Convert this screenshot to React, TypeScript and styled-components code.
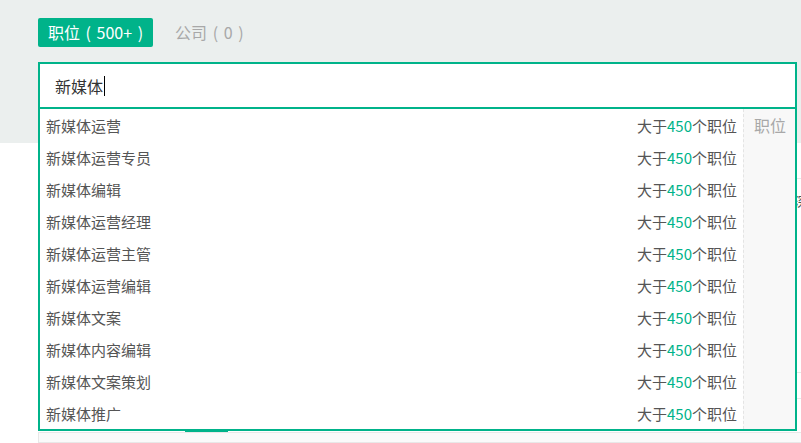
import React from 'react';
import styled, { createGlobalStyle } from 'styled-components';

const GREEN = '#00b38a';

const suggestions = [
  '新媒体运营',
  '新媒体运营专员',
  '新媒体编辑',
  '新媒体运营经理',
  '新媒体运营主管',
  '新媒体运营编辑',
  '新媒体文案',
  '新媒体内容编辑',
  '新媒体文案策划',
  '新媒体推广',
];

function App() {
  return (
    <Page>
      <GlobalStyle />
      <Header>
        <Tabs>
          <Tab active>职位 ( 500+ )</Tab>
          <Tab>公司 ( 0 )</Tab>
        </Tabs>
        <SearchWrap>
          <SearchBox>
            <Query>新媒体</Query>
            <Caret />
          </SearchBox>
          <Dropdown>
            <Items>
              {suggestions.map((s) => (
                <Item key={s}>
                  <Name>{s}</Name>
                  <Count>
                    大于<em>450</em>个职位
                  </Count>
                </Item>
              ))}
            </Items>
            <Side>职位</Side>
          </Dropdown>
        </SearchWrap>
      </Header>

      <Content>
        <Filters>
          <FilterRow tall>
            <FilterText>深</FilterText>
          </FilterRow>
          <FilterRow />
        </Filters>
        <TabBar>
          <BarTab />
        </TabBar>
        <ListBox />
      </Content>
    </Page>
  );
}

export default App;

const GlobalStyle = createGlobalStyle`
  html, body {
    margin: 0;
    padding: 0;
    background: #fff;
    overflow: hidden;
  }
  body {
    font-family: "Noto Sans CJK SC", "Noto Sans", sans-serif;
  }
`;

const Page = styled.div`
  width: 801px;
  height: 443px;
  overflow: hidden;
`;

const Header = styled.div`
  height: 143px;
  box-sizing: border-box;
  background: #ebefee;
  padding: 18px 4px 0 38px;
`;

const Tabs = styled.div`
  display: flex;
  align-items: center;
  gap: 12px;
  height: 29px;
`;

const Tab = styled.div<{ active?: boolean }>`
  height: 29px;
  line-height: 29px;
  padding: 0 10px;
  border-radius: 2px;
  font-size: 16px;
  word-spacing: 2px;
  color: ${(p) => (p.active ? '#fff' : '#a8a8a8')};
  background: ${(p) => (p.active ? GREEN : 'transparent')};
`;

const SearchWrap = styled.div`
  position: relative;
  margin-top: 15px;
`;

const SearchBox = styled.div`
  height: 47px;
  box-sizing: border-box;
  border: 2px solid ${GREEN};
  background: #fff;
  display: flex;
  align-items: center;
  padding-left: 15px;
`;

const Query = styled.span`
  font-size: 16px;
  color: #333;
`;

const Caret = styled.span`
  display: inline-block;
  width: 1px;
  height: 20px;
  background: #000;
  margin-left: 1px;
`;

const Dropdown = styled.div`
  position: absolute;
  top: 100%;
  left: 0;
  right: 0;
  z-index: 10;
  display: flex;
  background: #fff;
  border: 2px solid ${GREEN};
  border-top: none;
`;

const Items = styled.ul`
  flex: 1;
  list-style: none;
  margin: 0;
  padding: 0 6px 0 6px;
`;

const Item = styled.li`
  height: 32px;
  display: flex;
  align-items: center;
  justify-content: space-between;
  font-size: 15px;
  color: #555;
`;

const Name = styled.span``;

const Count = styled.span`
  em {
    font-style: normal;
    color: ${GREEN};
  }
`;

const Side = styled.div`
  width: 52px;
  box-sizing: border-box;
  background: #f8f8f8;
  border-left: 1px dashed #e4e4e4;
  padding-left: 10px;
  line-height: 32px;
  font-size: 16px;
  color: #a8a8a8;
`;

const Content = styled.div`
  margin-left: 38px;
  width: 820px;
  padding-top: 35px;
`;

const Filters = styled.div`
  border-top: 1px solid #e8e8e8;
`;

const FilterRow = styled.div<{ tall?: boolean }>`
  height: ${(p) => (p.tall ? '193px' : '25px')};
  border-bottom: 1px solid #e8e8e8;
  position: relative;
`;

const FilterText = styled.span`
  position: absolute;
  left: 756px;
  top: 12px;
  font-size: 14px;
  color: #555;
`;

const TabBar = styled.div`
  display: flex;
  height: 33px;
  align-items: flex-end;
  padding-left: 147px;
`;

const BarTab = styled.div`
  width: 43px;
  height: 2px;
  background: ${GREEN};
`;

const ListBox = styled.div`
  height: 9px;
  background: #fafafa;
  border: 1px solid #e8e8e8;
`;
